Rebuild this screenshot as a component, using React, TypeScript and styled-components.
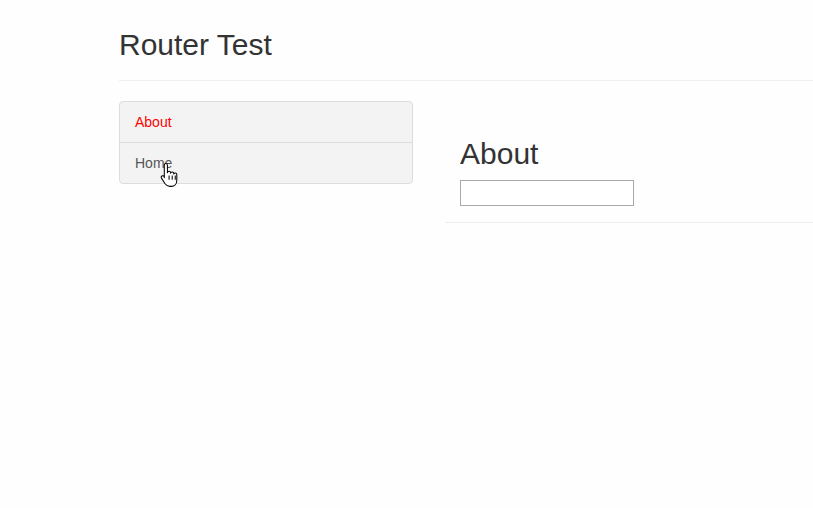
import { FC } from "react"
import styled, { createGlobalStyle } from "styled-components"

const GlobalStyle = createGlobalStyle`
  html, body {
    margin: 0;
    padding: 0;
    background: #fefefe;
    font-family: "Liberation Sans", Arial, sans-serif;
    color: #333;
    overflow: hidden;
  }
`

const Page = styled.div`
  width: 813px;
  height: 508px;
  padding-left: 119px;
  box-sizing: border-box;
`

const Header = styled.header`
  padding: 28px 0 19px;
  border-bottom: 1px solid #eeeeee;
`

const Title = styled.h1`
  margin: 0;
  font-size: 30px;
  font-weight: 400;
  line-height: 33px;
  color: #333;
`

const Row = styled.div`
  display: flex;
  align-items: flex-start;
  gap: 32px;
  margin-top: 20px;
`

const ListGroup = styled.nav`
  width: 294px;
  flex-shrink: 0;
  display: flex;
  flex-direction: column;
  background: #f3f3f3;
  border: 1px solid #dddddd;
  border-radius: 4px;
  box-sizing: border-box;
`

const ListItem = styled.a<{ $active?: boolean }>`
  position: relative;
  display: block;
  height: 40px;
  line-height: 40px;
  padding: 0 15px;
  font-size: 14px;
  color: ${({ $active }) => ($active ? "#ff0000" : "#555555")};
  text-decoration: none;
  & + & {
    border-top: 1px solid #dddddd;
  }
`

const Content = styled.section`
  flex: 1;
  padding: 36px 15px 16px;
  border-bottom: 1px solid #eeeeee;
  margin-right: -40px;
`

const Heading = styled.h2`
  margin: 0 0 10px;
  font-size: 30px;
  font-weight: 400;
  line-height: 33px;
  color: #333;
`

const TextInput = styled.input`
  display: block;
  width: 174px;
  height: 26px;
  box-sizing: border-box;
  border: 1px solid #a9a9a9;
  background: #fff;
  margin: 0;
`

const Cursor = styled.svg`
  position: absolute;
  left: 40px;
  top: 19px;
`

const HandCursor: FC = () => (
  <Cursor width="19" height="25" viewBox="0 0 18 24">
    <path
      d="M5.5 1.5c.9 0 1.5.6 1.5 1.5v7.2c.2-.9.8-1.4 1.6-1.4.9 0 1.5.6 1.5 1.5v.4c.2-.8.8-1.2 1.5-1.2.9 0 1.5.6 1.5 1.5v.6c.2-.6.7-1 1.4-1 .9 0 1.5.6 1.5 1.5v5.5c0 3.2-2 5.8-5.3 5.8H9.3c-2.1 0-3.4-.9-4.5-2.5L1.3 15.5c-.5-.8-.3-1.7.4-2.1.7-.4 1.6-.2 2.1.5L4 15V3c0-.9.6-1.5 1.5-1.5z"
      fill="#fff"
      stroke="#000"
      strokeWidth="1"
      strokeLinejoin="round"
    />
    <path d="M8.6 13v4M11.6 13v4M14.5 13v4" stroke="#000" strokeWidth="1" />
  </Cursor>
)

export default function App() {
  return (
    <>
      <GlobalStyle />
      <Page>
        <Header>
          <Title>Router Test</Title>
        </Header>
        <Row>
          <ListGroup>
            <ListItem $active href="#">About</ListItem>
            <ListItem href="#">
              Home
              <HandCursor />
            </ListItem>
          </ListGroup>
          <Content>
            <Heading>About</Heading>
            <TextInput type="text" />
          </Content>
        </Row>
      </Page>
    </>
  )
}
